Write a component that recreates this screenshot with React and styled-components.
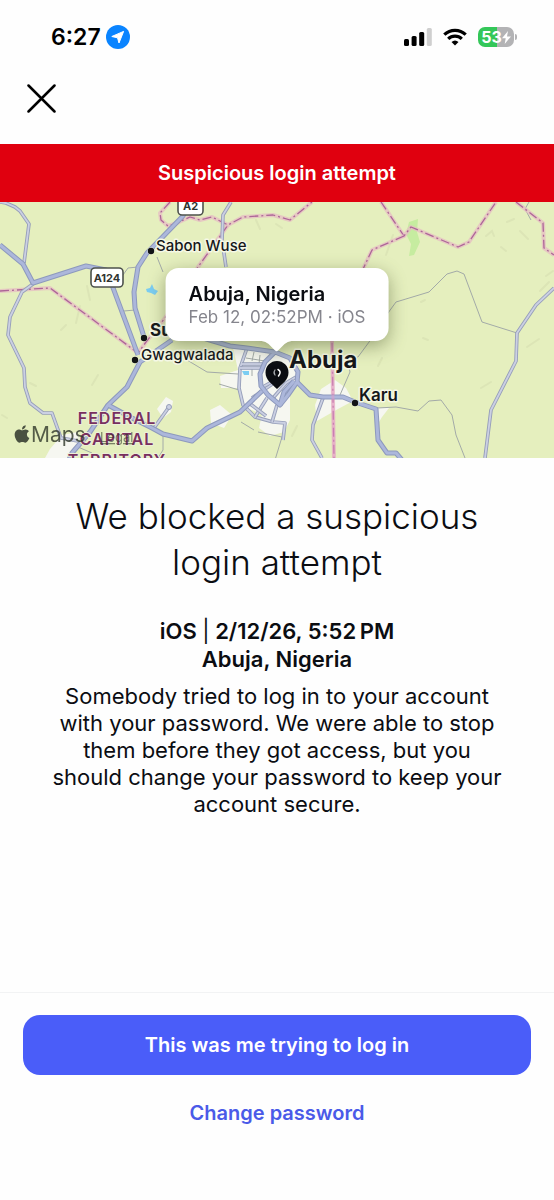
import React from "react";
import styled, { createGlobalStyle } from "styled-components";
import { FaApple } from "react-icons/fa";

const GlobalStyle = createGlobalStyle`
  * { box-sizing: border-box; }
  body {
    margin: 0;
    background: #fefefe;
    color: #0b0d12;
    font-family: Inter, "Liberation Sans", sans-serif;
  }
  button { font: inherit; border: 0; cursor: pointer; }
  h1, h2, p { margin: 0; }
`;

const Screen = styled.div`
  display: flex;
  flex-direction: column;
  min-height: 100vh;
`;

const StatusBar = styled.header`
  display: flex;
  align-items: center;
  justify-content: space-between;
  height: 74px;
  padding: 0 37px 0 51px;
  color: #000;
`;

const StatusGroup = styled.div`
  display: flex;
  align-items: center;
  gap: ${({ $gap }) => $gap}px;
`;

const Clock = styled.time`
  font-size: 23px;
  line-height: 28px;
  font-weight: 600;
  white-space: nowrap;
`;

const Battery = styled.div`
  display: flex;
  align-items: center;
  gap: 1px;
`;

const BatteryBody = styled.div`
  display: flex;
  align-items: center;
  justify-content: center;
  width: 36px;
  height: 20px;
  border-radius: 7px;
  background: linear-gradient(to right, #34c759 53%, #b3b3b5 53%);
  color: #fff;
  font-size: 16px;
  line-height: 20px;
  font-weight: 700;
`;

const BatteryTip = styled.div`
  width: 2px;
  height: 6px;
  border-radius: 0 2px 2px 0;
  background: #b3b3b5;
`;

const NavBar = styled.nav`
  height: 70px;
  padding: 5px 22px;
`;

const CloseButton = styled.button`
  display: block;
  padding: 5px;
  background: none;
  color: #000;
  svg { display: block; }
`;

const Banner = styled.div`
  background: #e0000f;
  color: #fff;
  font-size: 20px;
  line-height: 58px;
  font-weight: 600;
  text-align: center;
`;

const MapPanel = styled.section`
  position: relative;
  height: 256px;
  overflow: hidden;
  background: #e5efbe;
`;

const MapDrawing = styled.svg`
  display: block;
  width: 100%;
  height: 100%;
`;

const Callout = styled.div`
  position: absolute;
  top: 66px;
  left: 50%;
  transform: translateX(-50%);
  padding: 14px 23px 13px;
  border-radius: 13px;
  background: #fff;
  white-space: nowrap;
  filter: drop-shadow(0 5px 9px rgba(60, 70, 30, 0.45));
`;

const CalloutTail = styled.svg`
  position: absolute;
  top: 100%;
  left: 50%;
  margin: -1px 0 0 -15px;
`;

const CalloutTitle = styled.p`
  font-size: 20px;
  line-height: 24px;
  font-weight: 600;
`;

const CalloutMeta = styled.p`
  font-size: 17px;
  line-height: 22px;
  color: #85858d;
`;

const Content = styled.main`
  flex: 1;
  padding: 35px 52px;
  text-align: center;
`;

const Title = styled.h1`
  font-size: 35px;
  line-height: 46px;
  font-weight: 300;
`;

const Attempt = styled.h2`
  margin-top: 32px;
  font-size: 22px;
  line-height: 28px;
  font-weight: 600;
  span { font-weight: 400; }
`;

const Body = styled.p`
  margin-top: 10px;
  font-size: 22px;
  line-height: 27px;
`;

const Footer = styled.footer`
  display: flex;
  flex-direction: column;
  gap: 8px;
  padding: 22px 23px 57px;
  border-top: 1px solid #f2f3f4;
`;

const ActionButton = styled.button`
  height: 60px;
  border-radius: 17px;
  background: ${({ $primary }) => ($primary ? "#4a5df9" : "transparent")};
  color: ${({ $primary }) => ($primary ? "#fff" : "#4a5ae8")};
  && {
    font-size: 20px;
    line-height: 24px;
    font-weight: 600;
  }
`;

const MapLabel = styled.text`
  font-size: ${({ $size }) => $size}px;
  font-weight: ${({ $weight }) => $weight || 500};
  fill: #15171a;
  stroke: #f5f8e6;
  stroke-width: 3px;
  stroke-linejoin: round;
  paint-order: stroke;
`;

const RegionLabel = styled(MapLabel)`
  fill: #78305f;
  stroke: #ecefd8;
  stroke-width: 2px;
  letter-spacing: 1px;
  text-anchor: middle;
`;

const MapCredit = styled.text`
  font-size: ${({ $size }) => $size}px;
  fill: #30382a;
  opacity: ${({ $opacity }) => $opacity};
`;

const urban = [
  "M233 348 L262 350 L296 358 L300 374 L290 396 L290 420 L284 432 L270 436 L259 428 L262 414 L244 407 L238 388 L221 388 L220 376 L238 370Z",
  "M210 410 L220 405 L232 415 L224 428 L211 423Z",
  "M321 389 L335 380 L346 388 L353 401 L338 409 L317 421 L315 405Z",
  "M376 408 L389 408 L382 417 L379 422Z",
  "M62 435 L78 432 L79 449 L68 458 L45 458 L50 449Z",
  "M157 409 L166 397 L173 401 L171 412 L163 418Z",
];

const paths = [
  "M0 202 L6 203 L15 207 L20 211 L29 224 L24 263",
  "M33 284 L22 292 L10 317 L8 335 L24 368 L25 387 L30 403 L43 413 L52 413 L61 438 L78 441",
  "M231 202 L223 215 L222 240 L226 267",
  "M169 407 L154 428",
  "M247 348 L240 368 L239 388 L243 405 L255 417 L273 422 L285 423 L283 440",
  "M240 368 L262 368",
  "M242 364 L262 364",
  "M267 398 L255 417",
  "M277 405 L272 422",
  "M249 403 L266 416",
  "M252 398 L284 376",
  "M261 388 L286 374",
  "M273 398 L286 383 L296 377",
  "M323 398 L313 425 L312 440 L322 458",
  "M554 288 L536 305 L517 333 L516 361 L491 410 L485 458",
];

const highways = [
  "M0 245 L23 264 L33 283 L86 266 L106 270 L112 285 L138 355",
  "M195 200 L182 217 L147 253 L138 267 L134 292 L135 308 L144 337",
  "M172 340 L140 362 L127 387 L108 405 L90 432 L72 453 L68 462",
  "M108 405 L132 418 L152 428 L163 434 L192 441 L207 428 L240 412 L262 391",
  "M200 337 L213 341 L230 346 L247 348 L275 352 L290 358 L298 372 L297 382 L288 395 L280 405 L268 395 L261 386 L260 374 L265 362 L275 352",
  "M297 382 L310 395 L323 397 L343 397 L355 402 L376 409 L378 440 L387 453 L396 453 L402 460",
  "M280 405 L284 392 L294 381",
];

const lanes = [
  "M157 257 L163 272",
  "M138 267 L128 268 L123 275",
  "M124 311 L135 310",
  "M187 360 L207 372 L238 374",
  "M163 434 L163 450 L158 458",
  "M78 447 L92 453",
  "M340 395 L350 372 L347 358 L358 357 L372 338 L388 313 L396 302 L429 292 L447 274 L457 271 L464 274 L482 322 L517 333",
  "M377 408 L396 407 L418 411 L429 401 L441 400 L452 415 L456 435 L465 458",
  "M529 202 L525 209 L531 220",
  "M219 384 L239 390",
  "M241 422 L254 430",
  "M258 432 L282 437 L275 460",
  "M254 352 L252 361 M260 355 L259 364 M246 358 L265 361 M252 368 L252 376",
];

const boundaries = [
  "M0 291 L50 288 L138 353 L146 342 L165 318 L198 267 L228 225",
  "M170 202 L160 213 L161 220 L168 226 L177 223 L190 217 L200 220 L212 217 L228 225 L243 217 L273 215 L290 220 L312 202",
  "M381 202 L404 236 L411 227 L458 247 L469 242 L496 202",
  "M404 236 L372 250 L364 267 L350 300 L332 341 L334 458",
  "M516 202 L543 223 L544 248 L554 255",
];

const terrain = [
  "M486 236 l6 -5 l2 5 M501 247 l5 4 M520 231 l8 8 M507 222 l7 -3",
  "M540 291 l9 -9 M546 276 l7 -5 M527 347 l12 -8",
  "M76 323 l4 -17 M90 300 l-3 -14 M61 330 l5 -5",
  "M276 224 l6 4 M256 220 l4 9 M292 436 l5 -10",
  "M481 388 l10 -6 M421 302 l4 -2 M423 338 l5 2",
  "M92 385 l6 -10 M30 383 l6 3 M2 415 l5 3",
  "M386 255 l7 -20 M378 366 l4 -8",
];

const towns = [
  { x: 151, y: 251 },
  { x: 144, y: 338 },
  { x: 135, y: 360 },
  { x: 355, y: 403 },
];

function RoadShield({ x, y, width, label }) {
  return (
    <g>
      <rect x={x} y={y} width={width} height="19" rx="4" fill="#fff" stroke="#4d514c" strokeWidth="1.6" />
      <text x={x + width / 2} y={y + 14} fontSize="11" fontWeight="700" fill="#303431" textAnchor="middle">
        {label}
      </text>
    </g>
  );
}

function LoginMap() {
  return (
    <MapDrawing viewBox="0 202 554 256" preserveAspectRatio="xMidYMid slice" role="img" aria-label="Map of Abuja">
      {terrain.map((d) => (
        <path key={d} d={d} fill="none" stroke="#dce5b6" strokeWidth="2" strokeLinecap="round" />
      ))}
      <path d="M409 222 L418 219 L417 232 L420 242 L414 255 L409 256 L411 244 L406 234Z" fill="#c6eca0" />
      {urban.map((d) => (
        <path key={d} d={d} fill="#f6f7f1" />
      ))}
      <path d="M146 289 L150 288 L152 284 L154 289 L158 291 L155 295 L151 293 L147 292Z" fill="#7bcdf2" />
      <path d="M242 371 h7 v4 h-5Z" fill="#7bcdf2" />
      <g fill="none" strokeLinejoin="round">
        {lanes.map((d) => (
          <path key={d} d={d} stroke="#a3aaa8" strokeWidth="1" />
        ))}
        {boundaries.map((d) => (
          <g key={d}>
            <path d={d} stroke="#e6bcc3" strokeWidth="4" opacity="0.75" />
            <path d={d} stroke="#ad6598" strokeWidth="1.3" strokeDasharray="9 3 2 3" />
          </g>
        ))}
        {paths.map((d) => (
          <g key={d}>
            <path d={d} stroke="#969eb9" strokeWidth="3.6" />
            <path d={d} stroke="#cbd0e3" strokeWidth="1.8" />
          </g>
        ))}
        {highways.map((d) => (
          <path key={d} d={d} stroke="#8d99bd" strokeWidth="5" />
        ))}
        {highways.map((d) => (
          <path key={d} d={d} stroke="#acb7db" strokeWidth="3" />
        ))}
        <circle cx="169" cy="407" r="2.5" fill="#cbd0e3" stroke="#969eb9" />
        <path d="M332 341 L334 458" stroke="#e59ac9" strokeWidth="3" opacity="0.5" />
      </g>
      <RoadShield x={178} y={196} width={25} label="A2" />
      <RoadShield x={91} y={268} width={32} label="A124" />
      {towns.map(({ x, y }) => (
        <circle key={x} cx={x} cy={y} r="3.2" fill="#111315" stroke="#f5f8e6" strokeWidth="1" paintOrder="stroke" />
      ))}
      <MapLabel x="156" y="251" $size={15}>Sabon Wuse</MapLabel>
      <MapLabel x="150" y="336" $size={17} $weight={700}>Suleja</MapLabel>
      <MapLabel x="141" y="360" $size={15}>Gwagwalada</MapLabel>
      <MapLabel x="289" y="368" $size={24} $weight={700}>Abuja</MapLabel>
      <MapLabel x="359" y="401" $size={17} $weight={600}>Karu</MapLabel>
      <RegionLabel x="117" y="424" $size={16} $weight={600}>FEDERAL</RegionLabel>
      <RegionLabel x="117" y="445" $size={16} $weight={600}>CAPITAL</RegionLabel>
      <RegionLabel x="117" y="466" $size={16} $weight={600}>TERRITORY</RegionLabel>
      <FaApple x="12" y="424" size={20} color="#4a5141" />
      <MapCredit x="31" y="442" $size={21} $opacity={0.8}>Maps</MapCredit>
      <MapCredit x="100" y="442" $size={13} $opacity={0.6} textDecoration="underline">Legal</MapCredit>
      <path
        d="M277 389 C272 384 265.500 380 265.500 372.500 A11.500 11.500 0 0 1 288.500 372.500 C288.500 380 282 384 277 389Z"
        fill="#0b0d12"
      />
      <path d="M275 370 Q273 372.500 275 375" fill="none" stroke="#a9abb0" strokeWidth="1.200" strokeLinecap="round" />
      <path d="M278 369.500 Q282 371.500 278.500 376" fill="none" stroke="#fff" strokeWidth="1.500" strokeLinecap="round" />
    </MapDrawing>
  );
}

export default function App() {
  return (
    <Screen>
      <GlobalStyle />
      <StatusBar>
        <StatusGroup $gap={5}>
          <Clock>6:27</Clock>
          <svg width="24" height="24" viewBox="0 0 24 24" aria-label="Location in use">
            <circle cx="12" cy="12" r="12" fill="#0a84ff" />
            <path d="M17.600 6.400 L13 18 L11.500 12.800 L5.800 11.500Z" fill="#fff" stroke="#fff" strokeWidth="1" strokeLinejoin="round" />
          </svg>
        </StatusGroup>
        <StatusGroup $gap={11}>
          <svg width="28" height="18" viewBox="0 0 28 18" aria-label="Cellular signal">
            <rect x="0" y="11" width="5" height="7" rx="1.500" />
            <rect x="7.600" y="8" width="5" height="10" rx="1.500" />
            <rect x="15.200" y="4" width="5" height="14" rx="1.500" />
            <rect x="22.800" y="0" width="5" height="18" rx="1.500" fill="#cfcfcf" />
          </svg>
          <svg width="24" height="18" viewBox="0 0 24 18" aria-label="Wi-Fi">
            <g fill="none" stroke="#000" strokeWidth="3.200">
              <path d="M1.300 6.700 A15.500 15.500 0 0 1 22.700 6.700" />
              <path d="M5.200 10.800 A9.800 9.800 0 0 1 18.800 10.800" />
            </g>
            <path d="M12 17.500 L8.500 14 Q12 11 15.500 14Z" />
          </svg>
          <Battery>
            <BatteryBody>
              53
              <svg width="9" height="13" viewBox="0 0 9 13" aria-label="Charging">
                <path d="M6 0 L0 7.300 H3.700 L2.700 13 L9 5.400 H5Z" fill="#fff" />
              </svg>
            </BatteryBody>
            <BatteryTip />
          </Battery>
        </StatusGroup>
      </StatusBar>
      <NavBar>
        <CloseButton type="button" aria-label="Close">
          <svg width="29" height="29" viewBox="0 0 29 29" stroke="currentColor" strokeWidth="2.500" strokeLinecap="round">
            <path d="M1.500 1.500 L27.500 27.500 M27.500 1.500 L1.500 27.500" />
          </svg>
        </CloseButton>
      </NavBar>
      <Banner role="alert">Suspicious login attempt</Banner>
      <MapPanel>
        <LoginMap />
        <Callout>
          <CalloutTitle>Abuja, Nigeria</CalloutTitle>
          <CalloutMeta>Feb 12, 02:52PM · iOS</CalloutMeta>
          <CalloutTail width="30" height="12" viewBox="0 0 30 12">
            <path d="M0 0 H30 V1 Q26 1.500 23 4 L16.500 10.500 Q15 12 13.500 10.500 L7 4 Q4 1.500 0 1Z" fill="#fff" />
          </CalloutTail>
        </Callout>
      </MapPanel>
      <Content>
        <Title>We blocked a suspicious login attempt</Title>
        <Attempt>
          iOS <span>|</span> 2/12/26, 5:52&#8239;PM
          <br />
          Abuja, Nigeria
        </Attempt>
        <Body>
          Somebody tried to log in to your account with your password. We were able to stop them before they got access,
          but you should change your password to keep your account secure.
        </Body>
      </Content>
      <Footer>
        <ActionButton type="button" $primary>This was me trying to log in</ActionButton>
        <ActionButton type="button">Change password</ActionButton>
      </Footer>
    </Screen>
  );
}
